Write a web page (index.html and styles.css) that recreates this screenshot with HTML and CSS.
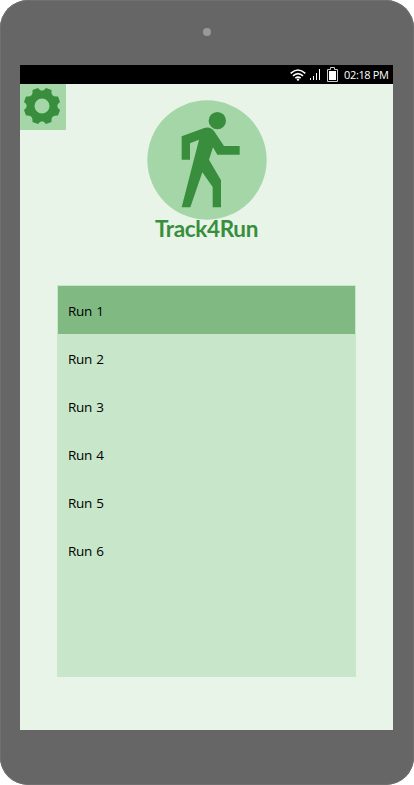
FILE: index.html
```html
<!DOCTYPE html>
<html lang="en">
<head>
<meta charset="utf-8">
<title>Track4Run</title>
<link rel="stylesheet" href="styles.css">
</head>
<body>
<div class="device">
  <div class="bezel"><span class="camera"></span></div>
  <div class="screen">
    <div class="status">
      <svg class="wifi" width="16" height="12" viewBox="0 0 16 12" fill="none" stroke="#fff" stroke-width="1.6"><path d="M.7 4.4Q8-2.4 15.3 4.4M3 6.9Q8 2.3 13 6.9M5.3 9.2Q8 6.9 10.7 9.2"/><circle cx="8" cy="10.6" r="1.2" fill="#fff" stroke="none"/></svg>
      <svg class="signal" width="11" height="12" viewBox="0 0 11 12" fill="#fff"><path d="M0 9h1v2H0zM3 7h1v4H3zM6 4h1v7H6zM9 0h1v11H9z"/></svg>
      <svg class="battery" width="11" height="15" viewBox="0 0 11 15"><path d="M3.5 2.5v-2h4v2h3v12H.5v-12z" fill="none" stroke="#ccc"/><path d="M2 4h7v9H2z" fill="#fff"/></svg>
      <span class="time">02:18 PM</span>
    </div>
    <main class="app">
      <button class="settings" aria-label="Settings">
        <svg width="36" height="36" viewBox="-18 -18 36 36" fill="#388e3c"><path fill-rule="evenodd" d="M-4 -18 Q0 -12.500 4 -18 L9.500 -16 Q8.500 -8.500 16 -9.500 L18 -4 Q12.500 0 18 4 L16 9.500 Q8.500 8.500 9.500 16 L4 18 Q0 12.500 -4 18 L-9.500 16 Q-8.500 8.500 -16 9.500 L-18 4 Q-12.500 0 -18 -4 L-16 -9.500 Q-8.500 -8.500 -9.500 -16Z M7.500 0a7.500 7.500 0 1 0-15 0a7.500 7.500 0 1 0 15 0Z"/></svg>
      </button>
      <header class="brand">
        <svg width="120" height="120" viewBox="21 17 360 360"><circle cx="201" cy="197" r="179" fill="#a5d6a7"/><g fill="#388e3c"><circle cx="232" cy="79" r="26"/><path d="M125 126L193 101Q211 95 222 110L252 155H299V181H232L219 159L207 196L243 258V339H218V278L187 234L151 339H125L177 136L150 147V196H125Z"/></g></svg>
        <h1>Track4Run</h1>
      </header>
      <ul class="runs">
        <li class="selected">Run 1</li>
        <li>Run 2</li>
        <li>Run 3</li>
        <li>Run 4</li>
        <li>Run 5</li>
        <li>Run 6</li>
      </ul>
    </main>
  </div>
</div>
</body>
</html>
```
FILE: styles.css
```css
* { box-sizing: border-box; }
body { margin: 0; background: #fff; }
.device { width: 414px; height: 785px; padding: 0 20px; background: #666; border-radius: 28px; box-shadow: inset 0 0 0 1px #707070; }
.bezel { height: 65px; display: flex; justify-content: center; padding-top: 28px; }
.camera { width: 8px; height: 8px; border-radius: 50%; background: #999; }
.screen { width: 373px; height: 665px; background: #e8f4e8; }
.status { height: 19px; background: #000; color: #fff; display: flex; align-items: center; justify-content: flex-end; padding-right: 4px; }
.signal { margin-left: 4px; }
.battery { margin-left: 6px; }
.time { margin-left: 6px; width: 45px; font: 11px/19px "Open Sans", sans-serif; letter-spacing: -0.35px; white-space: nowrap; }
.app { position: relative; height: 646px; padding: 16px 37px 53px; display: flex; flex-direction: column; }
.settings { position: absolute; left: 0; top: 0; width: 46px; height: 46px; padding: 4px; border: 0; background: #a5d6a7; display: flex; }
.brand { height: 185px; display: flex; flex-direction: column; align-items: center; }
.brand svg { flex: none; }
.brand h1 { margin: -5px 0 0; font: bold 22.5px/28px Lato, sans-serif; letter-spacing: -0.35px; color: #388e3c; }
.runs { list-style: none; width: 299px; height: 392px; margin: 0; padding: 1px; background: #c8e6c9; font: 13.5px/48px "Open Sans", sans-serif; letter-spacing: -0.3px; word-spacing: 1px; color: #000; }
.runs li { height: 48px; padding: 1px 10px 0; }
.selected { background: #81b983; }
```
